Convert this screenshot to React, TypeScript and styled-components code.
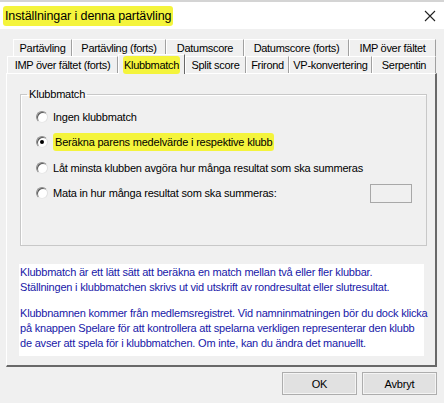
import styled, { createGlobalStyle } from "styled-components";

const GlobalStyle = createGlobalStyle`
  html, body { margin: 0; padding: 0; background: #f0f0f0; }
  body { font-family: "Liberation Sans", Arial, sans-serif; }
`;

const Window = styled.div`
  width: 444px;
  height: 403px;
  background: #f0f0f0;
  display: flex;
  flex-direction: column;
  overflow: hidden;
  font-size: 11px;
  letter-spacing: -0.2px;
  color: #000;
`;

const TitleBar = styled.div`
  height: 27px;
  border-top: 2px solid #d4d4d4;
  background: #fff;
  display: flex;
  align-items: center;
  justify-content: space-between;
  padding: 0 8px 0 3px;
`;

const Marker = styled.span<{ $pad?: number }>`
  background: #f4f43c;
  border-radius: 3px;
  padding: 3px ${(p) => p.$pad ?? 2}px;
`;

const Title = styled.span`
  font-size: 12.5px;
  letter-spacing: -0.1px;
`;

const CloseX = styled.svg`
  width: 12px;
  height: 12px;
`;

const Body = styled.div`
  flex: 1;
  display: flex;
  flex-direction: column;
  padding: 10px 7px 0 6px;
`;

const TabRows = styled.div`
  display: flex;
  flex-direction: column;
`;

const TabRow = styled.div<{ $indent: number }>`
  display: flex;
  height: 17px;
  padding-left: ${(p) => p.$indent}px;
`;

const Tab = styled.div<{ $w: number; $active?: boolean }>`
  width: ${(p) => p.$w}px;
  flex-shrink: 0;
  box-sizing: border-box;
  display: flex;
  align-items: center;
  justify-content: center;
  border-left: 1px solid #fff;
  border-top: 1px solid #fff;
  border-right: 1px solid #a0a0a0;
  background: #f0f0f0;
  white-space: nowrap;
  letter-spacing: -0.3px;
  position: relative;
  ${(p) =>
    p.$active &&
    `
    margin-top: -2px;
    height: 20px;
    z-index: 2;
    border-right-color: #696969;
  `}
`;

const Panel = styled.div`
  height: 294px;
  box-sizing: border-box;
  border-left: 1px solid #fff;
  border-top: 1px solid #fff;
  border-right: 2px solid #696969;
  border-bottom: 2px solid #696969;
  padding: 14px 8px 0 13px;
  display: flex;
  flex-direction: column;
`;

const Group = styled.fieldset`
  margin: 0;
  padding: 4px 0 8px 15px;
  border: 1px solid #c8c8c8;
  box-shadow: inset 1px 1px 0 #fff;
  height: 158px;
  box-sizing: border-box;
  display: flex;
  flex-direction: column;
`;

const Legend = styled.legend`
  padding: 0 2px;
  margin-left: -9px;
`;

const Option = styled.label`
  display: flex;
  align-items: center;
  height: 25.5px;
  gap: 5px;
  white-space: nowrap;
`;

const Radio = styled.span<{ $checked?: boolean }>`
  width: 12px;
  height: 12px;
  flex-shrink: 0;
  border-radius: 50%;
  box-sizing: border-box;
  border: 1px solid #8c8c8c;
  border-bottom-color: #e8e8e8;
  border-right-color: #e0e0e0;
  background: #fff;
  box-shadow: inset 1px 1px 0 #5a5a5a;
  display: flex;
  align-items: center;
  justify-content: center;
  &::after {
    content: "";
    width: 4px;
    height: 4px;
    border-radius: 50%;
    background: ${(p) => (p.$checked ? "#000" : "transparent")};
  }
`;

const Spacer = styled.span`
  flex: 1;
`;

const NumberBox = styled.span`
  width: 42px;
  height: 19px;
  box-sizing: border-box;
  border: 1px solid #a8a8a8;
  background: #f0f0f0;
  margin-right: 14px;
`;

const Info = styled.div`
  margin-top: 18px;
  background: #fff;
  width: 405px;
  height: 92px;
  box-sizing: border-box;
  padding: 1px 0 0 1px;
  color: #1818a8;
  line-height: 15px;
  margin-left: -1px;
  white-space: nowrap;
`;

const Para = styled.p`
  margin: 0 0 11px;
`;

const Footer = styled.div`
  display: flex;
  justify-content: flex-end;
  gap: 5px;
  padding: 5px 0 0;
`;

const Button = styled.button`
  width: 75px;
  height: 23px;
  font: inherit;
  letter-spacing: inherit;
  background: #e1e1e1;
  border: 1px solid #adadad;
  box-shadow: inset 0 0 0 1px #f4f4f4;
  color: #000;
`;

const row1 = [
  ["Partävling", 59],
  ["Partävling (forts)", 94],
  ["Datumscore", 78],
  ["Datumscore (forts)", 105],
  ["IMP över fältet", 87],
] as const;

const row2 = [
  ["IMP över fältet (forts)", 111],
  ["Klubbmatch", 67],
  ["Split score", 61],
  ["Frirond", 43],
  ["VP-konvertering", 83],
  ["Serpentin", 64],
] as const;

export default function App() {
  return (
    <Window>
      <GlobalStyle />
      <TitleBar>
        <Title>
          <Marker>Inställningar i denna partävling</Marker>
        </Title>
        <CloseX viewBox="0 0 12 12">
          <path d="M1 1 L11 11 M11 1 L1 11" stroke="#222" strokeWidth="1.1" />
        </CloseX>
      </TitleBar>
      <Body>
        <TabRows>
          <TabRow $indent={7}>
            {row1.map(([t, w]) => (
              <Tab key={t} $w={w}>{t}</Tab>
            ))}
          </TabRow>
          <TabRow $indent={1}>
            {row2.map(([t, w]) =>
              t === "Klubbmatch" ? (
                <Tab key={t} $w={w} $active>
                  <Marker $pad={1}>{t}</Marker>
                </Tab>
              ) : (
                <Tab key={t} $w={w}>{t}</Tab>
              )
            )}
          </TabRow>
        </TabRows>
        <Panel>
          <Group>
            <Legend>Klubbmatch</Legend>
            <Option>
              <Radio />
              Ingen klubbmatch
            </Option>
            <Option>
              <Radio $checked />
              <Marker>Beräkna parens medelvärde i respektive klubb</Marker>
            </Option>
            <Option>
              <Radio />
              Låt minsta klubben avgöra hur många resultat som ska summeras
            </Option>
            <Option>
              <Radio />
              Mata in hur många resultat som ska summeras:
              <Spacer />
              <NumberBox />
            </Option>
          </Group>
          <Info>
            <Para>
              Klubbmatch är ett lätt sätt att beräkna en match mellan två eller fler klubbar.
              <br />
              Ställningen i klubbmatchen skrivs ut vid utskrift av rondresultat eller slutresultat.
            </Para>
            <Para>
              Klubbnamnen kommer från medlemsregistret. Vid namninmatningen bör du dock klicka
              <br />
              på knappen Spelare för att kontrollera att spelarna verkligen representerar den klubb
              <br />
              de avser att spela för i klubbmatchen. Om inte, kan du ändra det manuellt.
            </Para>
          </Info>
        </Panel>
        <Footer>
          <Button>OK</Button>
          <Button>Avbryt</Button>
        </Footer>
      </Body>
    </Window>
  );
}
